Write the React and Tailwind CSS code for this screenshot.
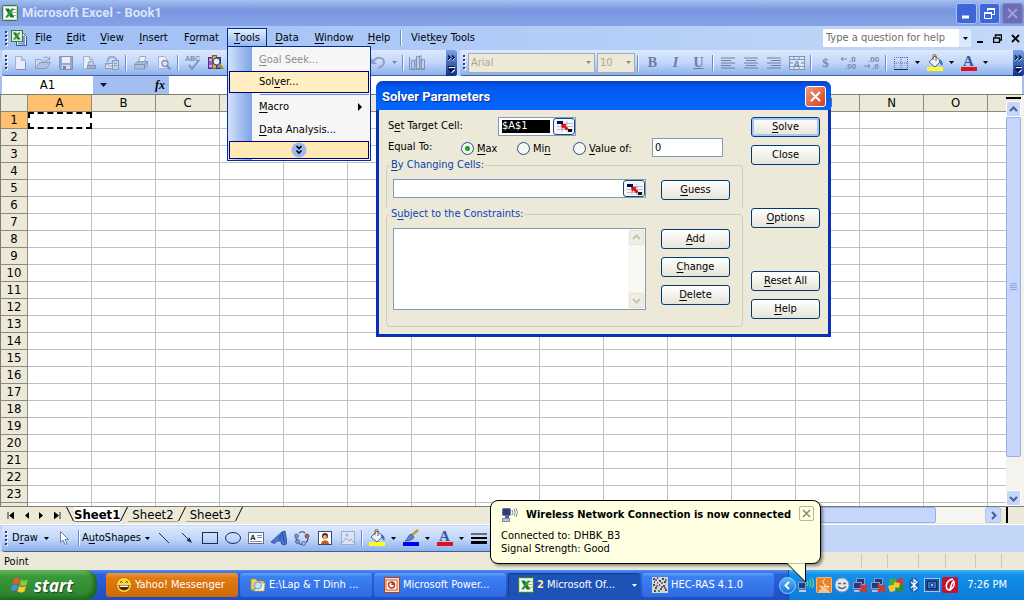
import { Fragment } from 'react';

const columns = ['A', 'B', 'C', 'D', 'E', 'F', 'G', 'H', 'I', 'J', 'K', 'L', 'M', 'N', 'O', ''];
const rows = Array.from({ length: 24 }, (_, i) => i + 1);

// "&File" -> <u>F</u>ile
const Mnemonic = ({ text }) => {
  const i = text.indexOf('&');
  if (i < 0 || text[i + 1] === ' ') return <>{text}</>;
  return (
    <>
      {text.slice(0, i)}
      <span className="underline underline-offset-2">{text[i + 1]}</span>
      {text.slice(i + 2)}
    </>
  );
};

const Svg = ({ w = 16, h = 16, className = '', children }) => (
  <svg width={w} height={h} viewBox={`0 0 ${w} ${h}`} className={`shrink-0 ${className}`} fill="none" aria-hidden="true">
    {children}
  </svg>
);

const Caret = ({ className = 'text-black' }) => (
  <Svg w={5} h={3} className={className}>
    <path d="M0 0H5L2.5 3Z" fill="currentColor" />
  </Svg>
);

const Grip = () => (
  <Svg w={3} h={17} className="ml-[3px]">
    {[0, 4, 8, 12].map((y) => (
      <Fragment key={y}>
        <rect x="1" y={y + 2} width="2" height="2" fill="#fff" />
        <rect x="0" y={y + 1} width="2" height="2" fill="#27417f" />
      </Fragment>
    ))}
  </Svg>
);

const Separator = () => (
  <span className="flex w-[6px] shrink-0 justify-center">
    <span className="h-[16px] w-px bg-[#6a8ccb]" />
    <span className="h-[16px] w-px bg-[#f1f9ff]" />
  </span>
);

const ToolButton = ({ label, children }) => (
  <button aria-label={label} className="flex h-[22px] w-[23px] shrink-0 items-center justify-center">
    {children}
  </button>
);

const DropButton = ({ label }) => (
  <button aria-label={label} className="flex h-[22px] w-[11px] shrink-0 items-center justify-center">
    <Caret />
  </button>
);

const EndCap = () => (
  <button
    aria-label="Toolbar options"
    className="flex h-[26px] w-[11px] shrink-0 items-center justify-center rounded-r-[3px] bg-linear-to-b from-[#7ba2ea] to-[#0a2f86]"
  >
    <Svg w={9} h={22}>
      <path d="M1.500 4.500L3.500 6.500L1.500 8.500M5.500 4.500L7.500 6.500L5.500 8.500" stroke="#fff" />
      <path d="M1 3.500L3 5.500L1 7.500M5 3.500L7 5.500L5 7.500" stroke="#000830" strokeWidth="1.300" />
      <path d="M2 15.500h6M2.500 18h5L5 20.500Z" stroke="#fff" fill="#fff" />
      <path d="M1 14.500h6M1 17h6L4 20Z" stroke="#000830" strokeWidth="0.800" fill="#000830" />
    </Svg>
  </button>
);

/* ---------- icons ---------- */

const ExcelIcon = () => (
  <Svg>
    <rect x="0.500" y="0.500" width="15" height="15" rx="1" fill="#c5e3bd" stroke="#3c7a3a" />
    <rect x="2" y="2" width="12" height="12" fill="#fff" />
    <path d="M10 4.500h4M10 7.500h4M10 10.500h4" stroke="#8cc084" />
    <path d="M3 3.500h4l5.500 9H8.500Z" fill="#1b7a2c" />
    <path d="M9.500 3.500h3L6 12.500H3Z" fill="#37963f" />
  </Svg>
);

const BookIcon = () => (
  <Svg w={17} h={17}>
    <path d="M5.500 3.500h7l3 3v9h-10Z" fill="#f2f6fe" stroke="#31508f" />
    <path d="M13 6v9.500M7 13.500h6" stroke="#7894cb" strokeWidth="2" />
    <rect x="0.500" y="0.500" width="11" height="11" fill="#d9efd2" stroke="#3c7a3a" />
    <path d="M2 2.500h3l4.500 7h-3Z" fill="#1b7a2c" />
    <path d="M7.500 2.500h2L4.500 9.500H2Z" fill="#37963f" />
  </Svg>
);

const PageIcon = () => (
  <Svg>
    <path d="M3.500 1.500h6l4 4v9h-10Z" fill="#e6ecf9" stroke="#a3b1d2" />
    <path d="M9.500 1.500v4h4" fill="#c5d0e8" stroke="#a3b1d2" />
    <path d="M4 14.500h9.500V7" stroke="#8292b8" />
  </Svg>
);

const OpenIcon = () => (
  <Svg>
    <path d="M0.500 13V4.500h5l1 1.500h5v2" fill="#d0daf0" stroke="#94a4c6" />
    <path d="M0.500 13.500L4.500 7.500h11l-4 6Z" fill="#b4c2e0" stroke="#8b9bbd" />
    <path d="M8.500 3.500c2-2.500 4.500-1.500 5.500 1m0.500-3v3.500H11" stroke="#8b9bbd" />
  </Svg>
);

const SaveIcon = () => (
  <Svg>
    <path d="M1.500 1.500h13v13h-12l-1-1Z" fill="#98a8cc" stroke="#8393b8" />
    <rect x="4" y="2" width="8" height="6" fill="#e8eefa" />
    <rect x="4" y="10" width="8" height="4" fill="#d5def0" />
    <rect x="5" y="11" width="3" height="3" fill="#7585aa" />
  </Svg>
);

const PermissionIcon = () => (
  <Svg>
    <path d="M2.500 1.500h6l3 3v9h-9Z" fill="#e9eef9" stroke="#a3b1cd" />
    <path d="M8.500 1.500v3h3" stroke="#a3b1cd" />
    <circle cx="10" cy="9" r="3" fill="#c2cde4" stroke="#94a4c6" />
    <rect x="6.500" y="10.500" width="8" height="3" fill="#a3b2d0" stroke="#8494b8" />
  </Svg>
);

const MailIcon = () => (
  <Svg>
    <path d="M3.500 7a4.500 4.500 0 0 1 9-1.500" stroke="#98a8c8" strokeWidth="2" />
    <path d="M1.500 8.500h10v5h-10Z" fill="#dbe3f4" stroke="#8b9bbd" />
    <path d="M1.500 8.500l5 3l5-3" stroke="#8b9bbd" />
    <rect x="8.500" y="5.500" width="6" height="9" fill="#c6d1e6" stroke="#8b9bbd" />
    <path d="M10 8.500h3M10 10.500h3" stroke="#8b9bbd" />
  </Svg>
);

const PrintIcon = () => (
  <Svg>
    <path d="M5.500 6.500l1.500-5h6l-1.500 5" fill="#eef2fb" stroke="#98a8c8" />
    <path d="M1.500 9.500l3-3h10v4l-3 3.500h-10Z" fill="#aebcd9" stroke="#8b9bbd" />
    <path d="M2 9.500h9.500v4M11.500 9.500l3-2.500" stroke="#7f8fb2" />
  </Svg>
);

const PreviewIcon = () => (
  <Svg>
    <path d="M2.500 1.500h6l3 3v9h-9Z" fill="#e9eef9" stroke="#a3b1cd" />
    <circle cx="9" cy="8.500" r="3" fill="#d8e2f5" stroke="#8090b4" strokeWidth="1.300" />
    <path d="M11 11l3.500 3.500" stroke="#8090b4" strokeWidth="2" />
  </Svg>
);

const SpellIcon = () => (
  <Svg w={18} h={18}>
    <text x="1" y="7" fontSize="7" fontWeight="bold" fill="#7b8cb3" fontFamily="Liberation Sans, sans-serif">ABC</text>
    <path d="M5 11l3 4l7-9" stroke="#7b93c8" strokeWidth="2" />
  </Svg>
);

const ResearchIcon = () => (
  <Svg w={17} h={17}>
    <rect x="1.500" y="3.500" width="4" height="11" fill="#8f62c8" stroke="#50307a" />
    <rect x="5.500" y="1.500" width="4" height="13" fill="#e0a060" stroke="#8a5a30" />
    <rect x="9.500" y="3.500" width="4" height="11" fill="#5d87d9" stroke="#223f80" />
    <path d="M2 6h3M6 5h3M2 12h3" stroke="#fff" />
    <circle cx="9.500" cy="7.500" r="3.500" fill="#e3f0ff" stroke="#333" />
    <path d="M12 10l4 5" stroke="#b98a20" strokeWidth="2.500" />
  </Svg>
);

const UndoIcon = () => (
  <Svg>
    <path d="M3 7c3-6 11-5 11 0c0 3-3 5-6 6" stroke="#8fa1c6" strokeWidth="2" />
    <path d="M1 3v6h6Z" fill="#8fa1c6" />
  </Svg>
);

const ChartIcon = () => (
  <Svg w={17} h={17}>
    <path d="M2.500 6.500h3v8h-3ZM7.500 2.500h3v12h-3ZM12.500 5.500h3v9h-3Z" fill="#c4cfe5" stroke="#8494b8" />
    <path d="M5.500 6.500l1.500-1.500v9M10.500 2.500l1.500-1v13M0.500 3v12.500H16" stroke="#8494b8" />
  </Svg>
);

const alignLines = {
  left: [[1, 15], [1, 11], [1, 15], [1, 11], [1, 15]],
  center: [[1, 15], [3, 13], [1, 15], [3, 13], [1, 15]],
  right: [[1, 15], [5, 15], [1, 15], [5, 15], [1, 15]],
};

const AlignIcon = ({ side }) => (
  <Svg>
    {alignLines[side].map(([a, b], i) => (
      <path key={i} d={`M${a} ${i * 2.5 + 3}H${b}`} stroke="#6f7f9f" />
    ))}
  </Svg>
);

const MergeIcon = () => (
  <Svg>
    <rect x="0.500" y="1.500" width="15" height="13" fill="#dfe7f6" stroke="#8393b5" />
    <path d="M0.500 4.500h15M0.500 11.500h15M5 1.500v3M10 1.500v3M5 11.500v3M10 11.500v3" stroke="#8393b5" />
    <path d="M1 8h3M12 8h3" stroke="#6f7f9f" />
    <text x="5" y="10.500" fontSize="9" fontWeight="bold" fill="#6f7f9f" fontFamily="Liberation Sans, sans-serif">a</text>
  </Svg>
);

const DecimalIcon = ({ more }) => (
  <Svg w={18}>
    <g fontSize="8" fontWeight="bold" fill="#7686a8" fontFamily="Liberation Sans, sans-serif">
      <text x={more ? 9 : 5} y="7">{more ? '.0' : '.00'}</text>
      <text x={more ? 5 : 9} y="14">{more ? '.00' : '.0'}</text>
    </g>
    {more ? (
      <path d="M7 4H1M3 2L1 4l2 2" stroke="#7686a8" />
    ) : (
      <path d="M1 11h6M5 9l2 2l-2 2" stroke="#7686a8" />
    )}
  </Svg>
);

const BordersIcon = () => (
  <Svg>
    <path d="M1.500 2v12M8 2v12M14.500 2v12M1 2.500h14M1 8h14" stroke="#5c6f9b" strokeDasharray="1 1" />
    <path d="M1 14.500h14" stroke="#1b2c58" />
  </Svg>
);

const FillIcon = ({ color = '#ffff1a' }) => (
  <Svg w={18} h={18}>
    <path d="M3 8l6-6l6 5l-6 6Z" fill="#eef3fb" stroke="#4f5f80" />
    <path d="M7 6V2a1.500 1.500 0 0 1 3 0v5" stroke="#7a5a20" />
    <path d="M13 6c3 0 4 2 3.500 6c-2-1-2.500-3-3.500-5Z" fill="#3f6fc0" />
    <rect x="1" y="13" width="16" height="4" fill={color} />
  </Svg>
);

const BrushIcon = () => (
  <Svg w={18} h={18}>
    <path d="M16 1L9 7" stroke="#c59a35" strokeWidth="2.500" />
    <path d="M9 5l3 3c-1 3-5 4-9 4c3-2 3-6 6-7Z" fill="#5d84cc" stroke="#2b4480" strokeWidth="0.700" />
    <rect x="1" y="13" width="16" height="4" fill="#0000f0" />
  </Svg>
);

const FontColorIcon = () => (
  <Svg w={18} h={18}>
    <text x="3" y="12" fontSize="15" fontWeight="bold" fill="#38589a" fontFamily="Liberation Serif, serif">A</text>
    <rect x="1" y="13" width="16" height="4" fill="#e0101c" />
  </Svg>
);

const PointerIcon = () => (
  <Svg>
    <path d="M4.500 1.500v11l2.500-2.500l2 4.500l2-1l-2-4h3.500Z" fill="#fff" stroke="#6d7fa8" />
  </Svg>
);

const TextBoxIcon = () => (
  <Svg>
    <rect x="0.500" y="2.500" width="15" height="11" fill="#fff" stroke="#5d6f97" />
    <text x="2" y="10" fontSize="8" fontWeight="bold" fill="#222" fontFamily="Liberation Sans, sans-serif">A</text>
    <path d="M9 5.500h5M9 7.500h5M2 11.500h12" stroke="#7f8fb3" />
  </Svg>
);

const WordArtIcon = () => (
  <Svg>
    <path d="M0 12L11 2l3-1l2 12l-2 2l-3.500-1l-0.500-3H6.500L3.500 13.500ZM8 8.500h2l-0.500-3Z" fill="#4a7ad6" stroke="#1f3f8a" strokeWidth="0.800" fillRule="evenodd" />
    <path d="M11 2l2.500 11" stroke="#1f3f8a" />
  </Svg>
);

const DiagramIcon = () => (
  <Svg>
    <path d="M5 3q3-2.500 6 0M14 8q0 3-2 4.500M2 8q0 1 1 2M5 13.500q1.500 1 3 1" stroke="#33508f" strokeWidth="1.200" />
    <circle cx="2.500" cy="6" r="2" fill="#8b96ae" stroke="#4a5778" strokeWidth="0.700" />
    <circle cx="13" cy="6" r="2" fill="#b5655f" stroke="#6a2a28" strokeWidth="0.700" />
    <circle cx="3.500" cy="11.500" r="2" fill="#7f97cc" stroke="#33508f" strokeWidth="0.700" />
    <circle cx="9.500" cy="13.500" r="2" fill="#a3b6e4" stroke="#33508f" strokeWidth="0.700" />
  </Svg>
);

const ClipArtIcon = () => (
  <Svg>
    <rect x="1.500" y="1.500" width="13" height="13" fill="#fff" stroke="#39496e" />
    <circle cx="8" cy="6" r="3" fill="#4a2a18" />
    <circle cx="8" cy="7" r="2" fill="#f0b070" />
    <path d="M4 14c0-5 8-5 8 0Z" fill="#c85a20" />
  </Svg>
);

const PictureIcon = () => (
  <Svg>
    <rect x="1.500" y="1.500" width="13" height="13" fill="#dde4f4" stroke="#a0aecb" />
    <path d="M2 13l4-5l3 3l2-2l3 4" stroke="#98a6c4" />
    <circle cx="7" cy="5" r="1.500" fill="#a9b6d0" />
  </Svg>
);

const RefPickerIcon = () => (
  <Svg w={17} h={12}>
    <path d="M1 3.500h16M1 6.500h16M1 9.500h16M6 1v11M11 1v11" stroke="#b7bccb" />
    <rect x="1" y="1" width="6" height="3" fill="#08085a" />
    <rect x="12" y="9" width="4" height="3" fill="#111" />
    <path d="M5 4h5.500L9.500 5.500l3 3l-2 2l-3-3L6 9Z" fill="#e01010" />
  </Svg>
);

const NetworkIcon = () => (
  <Svg w={17}>
    <rect x="1.500" y="1.500" width="8" height="7" rx="1" fill="#2f3d78" stroke="#6a7298" />
    <path d="M4 10h4" stroke="#555e82" strokeWidth="2" />
    <rect x="1.500" y="11.500" width="7" height="3" fill="#c2c8dc" stroke="#8088a8" />
    <path d="M11 3q2 2.500 0 5M13 2q2.500 3.500 0 7M15 1q3 4.500 0 9" stroke="#7c86a8" />
  </Svg>
);

const Chevron = ({ dir = 'up', className = 'text-[#4d6185]' }) => {
  const d = {
    up: 'M1 6L4.5 2.5L8 6',
    down: 'M1 3L4.5 6.5L8 3',
    left: 'M6 1L2.500 4.500L6 8',
    right: 'M3 1L6.500 4.500L3 8',
  }[dir];
  return (
    <Svg w={9} h={9} className={className}>
      <path d={d} stroke="currentColor" strokeWidth="2" />
    </Svg>
  );
};

/* ---------- window parts ---------- */

const TitleBar = () => (
  <header className="flex h-[26px] shrink-0 items-center bg-linear-to-b from-[#a3bff0] via-[#7a96df] via-40% to-[#86a3e6] pl-[2px] pr-px">
    <ExcelIcon />
    <h1 className="ml-1 text-[13px] font-bold text-[#dbe5fa] font-['Roboto','Noto_Sans',sans-serif]">Microsoft Excel - Book1</h1>
    <div className="ml-auto flex gap-[2px]">
      <button aria-label="Minimize" className="flex size-[21px] items-center justify-center rounded-[3px] border border-[#a9c0f2] bg-[#3e66d8]">
        <Svg w={13} h={13}><path d="M2 10h7" stroke="#fff" strokeWidth="3" /></Svg>
      </button>
      <button aria-label="Restore" className="flex size-[21px] items-center justify-center rounded-[3px] border border-[#a9c0f2] bg-[#3e66d8]">
        <Svg w={13} h={13}>
          <path d="M4.500 4V1.500h7v6H9" stroke="#fff" />
          <path d="M4 2h8" stroke="#fff" strokeWidth="2" />
          <path d="M1.500 5.500h7v6h-7Z" stroke="#fff" />
          <path d="M1 6h8" stroke="#fff" strokeWidth="2" />
        </Svg>
      </button>
      <button aria-label="Close" className="flex size-[21px] items-center justify-center rounded-[3px] border border-[#8388c8] bg-[#6c6db5]">
        <Svg w={13} h={13}><path d="M2 2l9 9M11 2l-9 9" stroke="#a09fd8" strokeWidth="2" /></Svg>
      </button>
    </div>
  </header>
);

const ToolsMenu = () => (
  <div role="menu" className="absolute left-[-1px] top-full z-20 -mt-px w-[144px] border border-[#002d96] bg-linear-to-r from-[#d3e2fb] to-[#7da3e4] bg-[length:24px_100%] bg-no-repeat bg-[#f6f6f6] p-px">
    <button role="menuitem" className="flex h-[23px] w-full items-center pl-[30px] text-[#8d8d8d]">
      <Mnemonic text="&Goal Seek..." />
    </button>
    <button role="menuitem" className="flex h-[22px] w-full items-center border border-[#000080] bg-[#ffeec2] pl-[29px]">
      <Mnemonic text="Sol&ver..." />
    </button>
    <div className="ml-[31px] mt-px h-px bg-[#6a8ccb]" />
    <button role="menuitem" className="flex h-[23px] w-full items-center pl-[30px]">
      <Mnemonic text="&Macro" />
      <Svg w={5} h={8} className="ml-auto mr-[7px]"><path d="M1 0v8l4-4Z" fill="#000" /></Svg>
    </button>
    <button role="menuitem" className="flex h-[23px] w-full items-center pl-[30px]">
      <Mnemonic text="&Data Analysis..." />
    </button>
    <button aria-label="Expand menu" className="flex h-[18px] w-full items-center justify-center border border-[#000080] bg-[#ffe9b4]">
      <Svg>
        <circle cx="8" cy="8" r="7.500" fill="#9dbaf0" />
        <path d="M5.500 4L8 6.500L10.500 4M5.500 8.500L8 11l2.500-2.500" stroke="#000" strokeWidth="1.600" />
      </Svg>
    </button>
  </div>
);

const menus = [
  { text: '&File', width: 'w-[31px]' },
  { text: '&Edit', width: 'w-[34px]' },
  { text: '&View', width: 'w-[38px]' },
  { text: '&Insert', width: 'w-[45px]' },
  { text: 'F&ormat', width: 'w-[51px]' },
  { text: '&Tools', width: 'w-[40px]', open: true },
  { text: '&Data', width: 'w-[40px]' },
  { text: '&Window', width: 'w-[54px]' },
  { text: '&Help', width: 'w-[36px]' },
];

const MenuBar = () => (
  <nav className="flex h-[24px] shrink-0 items-center bg-linear-to-r from-[#9ebef5] to-[#c4d9f9] pl-[2px]">
    <Grip />
    <span className="ml-[3px]"><BookIcon /></span>
    {menus.map((m) =>
      m.open ? (
        <div key={m.text} className={`relative mt-[2px] h-[19px] self-start border border-b-0 border-[#002d96] bg-linear-to-b from-[#e3efff] to-[#8fb2ee] ${m.width}`}>
          <button className="flex h-[18px] w-full items-center justify-center"><Mnemonic text={m.text} /></button>
          <ToolsMenu />
        </div>
      ) : (
        <button key={m.text} className={`h-[20px] text-center ${m.width}`}><Mnemonic text={m.text} /></button>
      )
    )}
    <span className="ml-px"><Separator /></span>
    <button className="h-[20px] w-[78px] text-center"><Mnemonic text="Viet&key Tools" /></button>
    <div className="ml-auto flex h-[18px] w-[148px] bg-white">
      <input
        aria-label="Type a question for help"
        placeholder="Type a question for help"
        className="w-0 flex-1 pl-[3px] outline-none placeholder:text-[#6d6d6d]"
      />
      <button aria-label="Help topics" className="flex w-[12px] items-center justify-center bg-[#dce8fc]"><Caret /></button>
    </div>
    <div className="ml-[2px] mr-px flex gap-[2px]">
      <button aria-label="Minimize workbook" className="flex size-[14px] items-end justify-center pb-px"><span className="h-[2px] w-[6px] bg-black" /></button>
      <button aria-label="Restore workbook" className="flex size-[16px] items-center justify-center">
        <Svg w={9} h={9}><path d="M2.500 3V1h6v5H7M0.500 4h6v4.500h-6Z" stroke="#000" strokeWidth="1.400" /></Svg>
      </button>
      <button aria-label="Close workbook" className="flex size-[16px] items-center justify-center">
        <Svg w={9} h={9}><path d="M1 1l7 7M8 1L1 8" stroke="#000" strokeWidth="1.800" /></Svg>
      </button>
    </div>
  </nav>
);

const barClass = 'flex h-[26px] items-center rounded-[3px] bg-linear-to-b from-[#dde9fd] via-[#c2d7fa] via-50% to-[#8eb0ec] border-b border-[#3b619c]';

const Toolbars = () => (
  <div className="flex h-[26px] shrink-0 gap-[3px] bg-[#bdd3f8] pl-[2px]">
    <div className={`${barClass} w-[455px] shrink-0`}>
      <Grip />
      <ToolButton label="New"><PageIcon /></ToolButton>
      <ToolButton label="Open"><OpenIcon /></ToolButton>
      <ToolButton label="Save"><SaveIcon /></ToolButton>
      <ToolButton label="Permission"><PermissionIcon /></ToolButton>
      <ToolButton label="E-mail"><MailIcon /></ToolButton>
      <Separator />
      <ToolButton label="Print"><PrintIcon /></ToolButton>
      <ToolButton label="Print Preview"><PreviewIcon /></ToolButton>
      <Separator />
      <ToolButton label="Spelling"><SpellIcon /></ToolButton>
      <ToolButton label="Research"><ResearchIcon /></ToolButton>
      <div className="ml-auto flex items-center pr-[17px]">
        <ToolButton label="Undo"><UndoIcon /></ToolButton>
        <button aria-label="Undo list" className="flex w-[11px] justify-center"><Caret className="text-[#7686a8]" /></button>
        <Separator />
        <ToolButton label="Chart Wizard"><ChartIcon /></ToolButton>
      </div>
      <EndCap />
    </div>
    <div className={`${barClass} min-w-0 flex-1`}>
      <Grip />
      <select aria-label="Font" disabled className="ml-[2px] h-[20px] w-[127px] shrink-0 appearance-none border border-[#9fabc0] bg-[#ece9d8] pl-[2px] text-[#aca899]">
        <option>Arial</option>
      </select>
      <Svg w={5} h={3} className="-ml-[9px] mr-1"><path d="M0 0H5L2.500 3Z" fill="#8f8d80" /></Svg>
      <select aria-label="Font Size" disabled className="ml-[2px] h-[20px] w-[38px] shrink-0 appearance-none border border-[#9fabc0] bg-[#ece9d8] pl-[2px] text-[#aca899]">
        <option>10</option>
      </select>
      <Svg w={5} h={3} className="-ml-[9px] mr-1"><path d="M0 0H5L2.500 3Z" fill="#8f8d80" /></Svg>
      <Separator />
      <ToolButton label="Bold"><span className="text-[14px] font-bold text-[#6c7ca0] font-['Liberation_Serif',serif]">B</span></ToolButton>
      <ToolButton label="Italic"><span className="text-[14px] font-bold italic text-[#6c7ca0] font-['Liberation_Serif',serif]">I</span></ToolButton>
      <ToolButton label="Underline"><span className="text-[14px] font-bold text-[#6c7ca0] underline font-['Liberation_Serif',serif]">U</span></ToolButton>
      <Separator />
      <ToolButton label="Align Left"><AlignIcon side="left" /></ToolButton>
      <ToolButton label="Center"><AlignIcon side="center" /></ToolButton>
      <ToolButton label="Align Right"><AlignIcon side="right" /></ToolButton>
      <ToolButton label="Merge and Center"><MergeIcon /></ToolButton>
      <Separator />
      <ToolButton label="Currency"><span className="text-[13px] font-bold text-[#7686a8] font-['Liberation_Serif',serif]">$</span></ToolButton>
      <ToolButton label="Increase Decimal"><DecimalIcon more /></ToolButton>
      <ToolButton label="Decrease Decimal"><DecimalIcon /></ToolButton>
      <Separator />
      <ToolButton label="Borders"><BordersIcon /></ToolButton>
      <DropButton label="Border styles" />
      <ToolButton label="Fill Color"><FillIcon /></ToolButton>
      <DropButton label="Fill colors" />
      <ToolButton label="Font Color"><FontColorIcon /></ToolButton>
      <DropButton label="Font colors" />
      <span className="ml-auto"><EndCap /></span>
    </div>
  </div>
);

const FormulaBar = () => (
  <div className="flex h-[18px] shrink-0 bg-[#a3bff2] px-[2px]">
    <input aria-label="Name Box" defaultValue="A1" className="w-[91px] bg-white text-center text-[13px] outline-none" />
    <button aria-label="Names" className="flex w-[20px] items-center justify-center">
      <Svg w={7} h={4}><path d="M0 0H7L3.500 4Z" fill="#001040" /></Svg>
    </button>
    <button aria-label="Insert Function" className="ml-auto w-[16px] text-[12px] font-bold italic leading-4 font-['Liberation_Serif',serif]">fx</button>
    <input aria-label="Formula" className="ml-px w-[calc(100%-167px)] bg-white outline-none" />
  </div>
);

const Sheet = () => (
  <main className="flex min-h-0 flex-1 border-l border-t border-[#7f7d70] bg-[#ece9d8]">
    <div className="min-w-0 flex-1 overflow-hidden bg-white">
      <table className="w-max table-fixed border-separate border-spacing-0 text-[13px] leading-4">
        <thead>
          <tr>
            <th className="h-[17px] w-[27px] border-b border-r border-[#8e8b7c] bg-[#ece9d8] p-0" />
            {columns.map((c) => (
              <th
                key={c}
                scope="col"
                className={`h-[17px] w-[64px] border-b border-r border-[#8e8b7c] p-0 font-normal ${c === 'A' ? 'bg-[#ffc06f]' : 'bg-[#ece9d8]'}`}
              >
                {c}
              </th>
            ))}
          </tr>
        </thead>
        <tbody>
          {rows.map((r) => (
            <tr key={r}>
              <th
                scope="row"
                className={`h-[17px] border-b border-r border-[#8e8b7c] p-0 font-normal ${r === 1 ? 'bg-[#ffc06f]' : 'bg-[#ece9d8]'}`}
              >
                {r < 24 && r}
              </th>
              {columns.map((c) => (
                <td
                  key={c}
                  className={c === 'A' && r === 1 ? 'border-2 border-dashed border-black p-0' : 'border-b border-r border-[#c0c0c0] p-0'}
                />
              ))}
            </tr>
          ))}
        </tbody>
      </table>
    </div>
    <div className="flex w-[18px] shrink-0 flex-col bg-[#f4f3ee] pr-[3px]">
      <div className="flex h-[6px] shrink-0 items-center bg-[#ece9d8]"><span className="h-[2px] w-full bg-black" /></div>
      <button aria-label="Scroll up" className="flex h-[16px] shrink-0 items-center justify-center rounded-[2px] border border-white bg-[#c5d5fb]"><Chevron /></button>
      <div className="flex flex-1 flex-col pb-[33px]">
        <div className="flex flex-1 items-center justify-center rounded-[2px] border border-[#98b0e8] bg-[#c5d5fb]">
          <Svg w={7} h={8}><path d="M0 0.500h7M0 2.500h7M0 4.500h7M0 6.500h7" stroke="#8ca6e0" /></Svg>
        </div>
      </div>
      <button aria-label="Scroll down" className="flex h-[16px] shrink-0 items-center justify-center rounded-[2px] border border-white bg-[#c5d5fb]"><Chevron dir="down" /></button>
    </div>
  </main>
);

const TabEdge = ({ d = 'M7.500 0L0.500 14' }) => (
  <Svg w={8} h={15}><path d={d} stroke="#000" /></Svg>
);

const SheetTabs = () => (
  <div className="flex h-[18px] shrink-0 items-start border-t border-[#7f7d70] bg-[#ece9d8] pl-[2px]">
    <div className="flex h-[16px] w-[64px] shrink-0 items-center justify-around">
      <button aria-label="First sheet"><Svg w={7} h={7}><path d="M1 0v7M7 0v7L2.500 3.500Z" stroke="#000" fill="#000" strokeWidth="0.800" /></Svg></button>
      <button aria-label="Previous sheet"><Svg w={4} h={7}><path d="M4 0v7L0 3.500Z" fill="#000" /></Svg></button>
      <button aria-label="Next sheet"><Svg w={4} h={7}><path d="M0 0v7L4 3.500Z" fill="#000" /></Svg></button>
      <button aria-label="Last sheet"><Svg w={7} h={7}><path d="M6 0v7M0 0v7L4.500 3.500Z" stroke="#000" fill="#000" strokeWidth="0.800" /></Svg></button>
    </div>
    <TabEdge d="M0.500 0L7.500 14" />
    <button className="h-[15px] border-b border-[#7f7d70] bg-white text-[13px] font-bold leading-4">Sheet1</button>
    <TabEdge />
    <button className="h-[15px] border-b border-[#a8a594] px-1 text-[13px] leading-4">Sheet2</button>
    <TabEdge />
    <button className="h-[15px] border-b border-[#a8a594] px-1 text-[13px] leading-4">Sheet3</button>
    <TabEdge />
    <div className="ml-auto flex h-[16px] w-[50%] pr-[16px]">
      <div className="flex flex-1 bg-[#f6f5f0]">
        <div className="mr-[49px] flex-1 rounded-[2px] border border-[#98b0e8] bg-[#c5d5fb]" />
      </div>
      <button aria-label="Scroll right" className="flex w-[16px] items-center justify-center rounded-[2px] border border-[#b5c6f0] bg-[#c5d5fb]"><Chevron dir="right" /></button>
      <span className="ml-[5px] w-[2px] bg-black" />
    </div>
  </div>
);

const DrawingBar = () => (
  <div className="flex h-[28px] shrink-0 items-center border-t border-white bg-[#c4d6f8] pl-[2px]">
    <div className={`${barClass} w-[640px]`}>
      <Grip />
      <button className="ml-1 flex items-center gap-[6px]"><span><Mnemonic text="D&raw" /></span><Caret /></button>
      <span className="ml-1"><ToolButton label="Select Objects"><PointerIcon /></ToolButton></span>
      <Separator />
      <button className="flex items-center gap-[4px]"><span><Mnemonic text="A&utoShapes" /></span><Caret /></button>
      <span className="w-[2px]" />
      <ToolButton label="Line"><Svg><path d="M3 3l10 10" stroke="#1c2c58" /></Svg></ToolButton>
      <ToolButton label="Arrow"><Svg><path d="M3 3l8 8" stroke="#1c2c58" /><path d="M13 13l-5.500-2.500l3-3Z" fill="#1c2c58" /></Svg></ToolButton>
      <ToolButton label="Rectangle"><Svg><rect x="0.500" y="2.500" width="15" height="11" stroke="#1c2c58" /></Svg></ToolButton>
      <ToolButton label="Oval"><Svg><ellipse cx="8" cy="8" rx="7.500" ry="5.500" stroke="#1c2c58" /></Svg></ToolButton>
      <ToolButton label="Text Box"><TextBoxIcon /></ToolButton>
      <ToolButton label="WordArt"><WordArtIcon /></ToolButton>
      <ToolButton label="Diagram"><DiagramIcon /></ToolButton>
      <ToolButton label="Clip Art"><ClipArtIcon /></ToolButton>
      <ToolButton label="Picture"><PictureIcon /></ToolButton>
      <Separator />
      <ToolButton label="Fill Color"><FillIcon /></ToolButton>
      <DropButton label="Fill colors" />
      <ToolButton label="Line Color"><BrushIcon /></ToolButton>
      <DropButton label="Line colors" />
      <ToolButton label="Font Color"><FontColorIcon /></ToolButton>
      <DropButton label="Font colors" />
      <ToolButton label="Line Style"><Svg><path d="M0 4h16" stroke="#000" /><path d="M0 8h16" stroke="#000" strokeWidth="2" /><path d="M0 12.500h16" stroke="#000" strokeWidth="3" /></Svg></ToolButton>
    </div>
  </div>
);

const StatusBar = () => (
  <footer className="flex h-[18px] shrink-0 items-center bg-[#ece9d8] pl-[4px]">
    <span className="mt-[2px]">Point</span>
    <div className="ml-auto flex h-[14px] pr-[22px]">
      <span className="w-[26px] border-l border-[#cbc7b4]" />
      <span className="w-[31px] border-l border-[#cbc7b4]" />
      <span className="w-[27px] border-l border-[#cbc7b4]" />
      <span className="w-[30px] border-l border-[#cbc7b4]" />
      <span className="w-[27px] border-x border-[#cbc7b4]" />
    </div>
  </footer>
);

/* ---------- solver dialog ---------- */

const XpButton = ({ text, primary, className = '' }) => (
  <button
    className={`h-[20px] w-[69px] shrink-0 rounded-[3px] border border-[#003c74] bg-linear-to-b from-white to-[#e6e4d8] pb-px ${primary ? 'shadow-[inset_0_0_0_2px_#a9c4f2]' : ''} ${className}`}
  >
    <Mnemonic text={text} />
  </button>
);

const PickerButton = ({ label }) => (
  <button aria-label={label} className="flex w-[22px] shrink-0 items-center justify-center rounded-[3px] border border-[#1c4a78] bg-[#f4f6fb]">
    <RefPickerIcon />
  </button>
);

const Radio = ({ text, checked }) => (
  <label className="flex w-[56px] shrink-0 items-center gap-[3px] whitespace-nowrap">
    <input
      type="radio"
      name="equal"
      defaultChecked={checked}
      className="size-[13px] shrink-0 appearance-none rounded-full border border-[#21517e] bg-[#f5f5f1] checked:bg-[radial-gradient(circle,#21a121_0_2px,#f5f5f1_3px)]"
    />
    <span className="mt-px"><Mnemonic text={text} /></span>
  </label>
);

const SolverDialog = () => (
  <section
    role="dialog"
    aria-labelledby="solver-title"
    className="absolute left-[376px] top-[81px] z-10 w-[455px] rounded-t-[7px] border-[3px] border-t-0 border-[#0831b9] bg-[#ece9d8]"
  >
    <div className="-mx-[3px] flex h-[29px] items-center rounded-t-[7px] bg-linear-to-b from-[#0a3cc8] via-[#0058ee] via-20% to-[#0466ff] pl-[6px] pr-[5px]">
      <h2 id="solver-title" className="mt-[2px] text-[13px] font-bold text-white [text-shadow:1px_1px_0_#0a2c8c] font-['Roboto','Noto_Sans',sans-serif]">Solver Parameters</h2>
      <button aria-label="Close dialog" className="ml-auto mt-[2px] flex size-[21px] items-center justify-center rounded-[3px] border border-white bg-linear-to-br from-[#f09a80] to-[#d03a10]">
        <Svg w={13} h={13}><path d="M2 2l9 9M11 2l-9 9" stroke="#fff" strokeWidth="2" /></Svg>
      </button>
    </div>
    <div className="flex pb-[7px] pl-[7px] pr-[8px]">
      <div className="w-[357px]">
        <div className="mt-[6px] flex h-[20px] items-center pl-[2px]">
          <label htmlFor="target" className="w-[110px]">S<span className="underline underline-offset-2">e</span>t Target Cell:</label>
          <div className="flex h-[19px] w-[78px] border border-[#7f9db9] bg-white">
            <div className="w-0 flex-1 py-[2px] pl-[3px]">
              <input id="target" defaultValue="$A$1" className="block h-[13px] w-[48px] bg-black text-white outline-none" />
            </div>
            <PickerButton label="Pick target cell" />
          </div>
        </div>
        <div className="flex h-[22px] items-center pl-[2px]">
          <span className="w-[73px]">Equal To:</span>
          <div className="mt-[2px] flex">
            <Radio text="&Max" checked />
            <Radio text="Mi&n" />
            <Radio text="&Value of:" />
          </div>
          <input aria-label="Value" defaultValue="0" className="ml-[23px] h-[19px] w-[71px] border border-[#7f9db9] bg-white pl-[2px] outline-none" />
        </div>
        <fieldset className="h-[49px] rounded-t-[4px] border border-b-0 border-[#d0cdbb] px-[6px]">
          <legend className="-ml-[3px] h-[14px] px-px leading-[14px] text-[#0b3fb4]"><Mnemonic text="&By Changing Cells:" /></legend>
          <div className="mt-[7px] flex items-start justify-between">
            <div className="flex h-[19px] w-[253px] border border-[#7f9db9] bg-white">
              <input aria-label="By Changing Cells" className="w-0 flex-1 pl-[2px] outline-none" />
              <PickerButton label="Pick changing cells" />
            </div>
            <XpButton text="&Guess" className="mr-[6px] mt-px" />
          </div>
        </fieldset>
        <fieldset className="rounded-[4px] border border-[#d0cdbb] px-[6px] pb-4">
          <legend className="-ml-[3px] h-[14px] px-px leading-[14px] text-[#0b3fb4]"><Mnemonic text="S&ubject to the Constraints:" /></legend>
          <div className="mt-[7px] flex items-start justify-between">
            <div className="flex h-[82px] w-[253px] border border-[#7f9db9] bg-white">
              <select size="4" aria-label="Constraints" className="w-0 flex-1 overflow-hidden outline-none" />
              <div className="flex w-[17px] flex-col justify-between bg-[#f8f7f2] p-px">
                <button aria-label="Scroll constraints up" className="flex h-[15px] items-center justify-center rounded-[2px] border border-[#e4e2d6] bg-[#f0eee4]"><Chevron className="text-[#c5c3b6]" /></button>
                <button aria-label="Scroll constraints down" className="flex h-[15px] items-center justify-center rounded-[2px] border border-[#e4e2d6] bg-[#f0eee4]"><Chevron dir="down" className="text-[#c5c3b6]" /></button>
              </div>
            </div>
            <div className="mr-[6px] mt-px flex flex-col gap-2">
              <XpButton text="&Add" />
              <XpButton text="&Change" />
              <XpButton text="&Delete" />
            </div>
          </div>
        </fieldset>
      </div>
      <div className="ml-auto flex flex-col gap-2 pt-[7px]">
        <XpButton text="&Solve" primary />
        <XpButton text="Close" />
        <XpButton text="&Options" className="my-[35px]" />
        <XpButton text="&Reset All" />
        <XpButton text="&Help" />
      </div>
    </div>
  </section>
);

/* ---------- taskbar ---------- */

const WindowsFlag = () => (
  <Svg w={20} h={18}>
    <path d="M3 3q3-2 6 0L7.500 8.500q-3-2-6 0Z" fill="#f0562a" />
    <path d="M10 3.500q3 2 7 0L15.500 9q-3.500 2-7 0Z" fill="#8cc63f" />
    <path d="M1 9.500q3-2 6 0L5.500 15q-3-2-6 0Z" fill="#4a8cf0" />
    <path d="M8 10q3.500 2 7 0L13.500 15.500q-3.500 2-7 0Z" fill="#fcc92f" />
  </Svg>
);

const SmileyIcon = () => (
  <Svg>
    <circle cx="8" cy="8" r="7.500" fill="#ffd93a" stroke="#a86500" strokeWidth="0.700" />
    <path d="M2.500 8h11c0 7-11 7-11 0Z" fill="#5a1d08" />
    <path d="M3.500 8.500h9v1.500h-9Z" fill="#fff" />
    <path d="M4 5.500q1-2 2.500 0M9.500 5.500q1-2 2.500 0" stroke="#4a2a00" />
  </Svg>
);

const FolderIcon = () => (
  <Svg>
    <path d="M1 2h5l1 2h7v9H1Z" fill="#f3d36a" stroke="#b08a20" strokeWidth="0.700" />
    <path d="M4 6h11l-1 8H3Z" fill="#fff3c8" stroke="#c9a640" strokeWidth="0.700" />
    <circle cx="8" cy="8.500" r="3.500" fill="#b5e8f7" stroke="#7a94a8" />
    <path d="M5.500 11L3 14" stroke="#7a94a8" strokeWidth="1.500" />
  </Svg>
);

const PowerPointIcon = () => (
  <Svg>
    <rect x="0.500" y="0.500" width="15" height="15" fill="#f6ddd0" stroke="#b8401a" />
    <rect x="2" y="3" width="11" height="10" fill="#fff" stroke="#c95a30" />
    <circle cx="7.500" cy="8" r="3" fill="#fff" stroke="#b8401a" strokeWidth="1.500" />
    <path d="M7.500 8V4.500a3.500 3.500 0 0 1 3.500 3.500Z" fill="#b8401a" />
  </Svg>
);

const HecIcon = () => (
  <Svg>
    <rect width="16" height="16" fill="#d4d4d4" />
    <path d="M1 2h2M5 1h1M10 2h2M2 5h1M7 4h2M12 5h2M1 8h2M7 8h1M11 9h2M3 11h2M8 12h2M13 13h2M2 14h2" stroke="#222" strokeWidth="1.500" />
    <path d="M3 3h2M9 6h2M4 9h2M12 11h2" stroke="#a020a0" strokeWidth="1.500" />
    <path d="M13 3h2M5 6h1M9 10h2M6 14h2" stroke="#108040" strokeWidth="1.500" />
  </Svg>
);

const tasks = [
  { title: 'Yahoo! Messenger', icon: <SmileyIcon />, look: 'bg-linear-to-b from-[#f39a3c] via-[#e27a12] via-20% to-[#cf6a08]' },
  { title: 'E:\\Lap & T Dinh ...', icon: <FolderIcon />, look: 'bg-linear-to-b from-[#6aa0fb] via-[#3c81f3] via-15% to-[#2f6be0]' },
  { title: 'Microsoft Power...', icon: <PowerPointIcon />, look: 'bg-linear-to-b from-[#6aa0fb] via-[#3c81f3] via-15% to-[#2f6be0]' },
  { title: 'Microsoft Of...', count: 2, icon: <ExcelIcon />, look: 'bg-[#1e52b7] shadow-[inset_1px_1px_1px_#153a8a]' },
  { title: 'HEC-RAS 4.1.0', icon: <HecIcon />, look: 'bg-linear-to-b from-[#6aa0fb] via-[#3c81f3] via-15% to-[#2f6be0]' },
];

const OfflineIcon = () => (
  <Svg>
    <rect x="4.500" y="1.500" width="8" height="6" fill="#26387a" stroke="#8b9ac8" />
    <rect x="1.500" y="5.500" width="8" height="6" fill="#26387a" stroke="#8b9ac8" />
    <path d="M2 14h7" stroke="#b4bedc" strokeWidth="2" />
    <path d="M8 8l7 7M15 8l-7 7" stroke="#e23020" strokeWidth="2.500" />
  </Svg>
);

const trayIcons = [
  ['Wireless', <Svg key="w"><rect x="0.500" y="5.500" width="7" height="6" fill="#26387a" stroke="#8b9ac8" /><path d="M1 14h7" stroke="#c4cce4" strokeWidth="2" /><path d="M9 4q2 2 0 5M11.500 2q2.500 4 0 8M14 1q3 5 0 10" stroke="#5fe070" strokeWidth="1.200" /></Svg>],
  ['Java', <Svg key="j"><rect x="0.500" y="0.500" width="15" height="15" rx="1" fill="#e8832a" stroke="#f7b878" /><path d="M9 2q-4 2.500-1 4.500t0 3M4 9.500q3 1.500 7 0q3-1 1 2M5 12h6M3 14h10" stroke="#fff" /></Svg>],
  ['Messenger', <Svg key="m"><circle cx="8" cy="8" r="7" fill="#e4e8ee" stroke="#8c98ac" /><path d="M4 6.500h3M9 6.500h3M4 9.500q4 4 8 0" stroke="#55627a" strokeWidth="1.300" /></Svg>],
  ['Local Area Connection', <OfflineIcon key="l" />],
  ['Local Area Connection 2', <OfflineIcon key="l2" />],
  ['Antivirus', <Svg key="a"><path d="M2 1l6 1v5L1 8Z" fill="#3fae3a" /><path d="M9 2l6-1v7H9Z" fill="#d83a28" /><path d="M0 9l8-2l-1 7l-5 1Z" fill="#f0cc2c" /><path d="M8 8h8l-1 7H8Z" fill="#2a8c48" /><path d="M6 5l6 1l-1 5l-5-1Z" fill="#f0cc2c" /></Svg>],
  ['Bluetooth', <Svg key="b"><ellipse cx="8" cy="8" rx="5" ry="7.500" fill="#1560b8" /><path d="M5 5l6 6l-3 2.500v-11L11 5l-6 6" stroke="#fff" strokeWidth="1.200" /></Svg>],
  ['Graphics', <Svg key="g"><rect x="0.500" y="1.500" width="15" height="13" fill="#1b4f9c" stroke="#a3c6f0" /><rect x="3.500" y="4.500" width="9" height="7" fill="#3a78cc" stroke="#0c2c60" /><circle cx="8" cy="8" r="2" fill="#8fc0f4" stroke="#0c2c60" /></Svg>],
  ['Security', <Svg key="s"><rect width="16" height="16" rx="2" fill="#c8102e" /><path d="M11 2C5 3 3 8 5 12C9 15 14 8 11.500 4Q9 7 8 14" stroke="#fff" strokeWidth="1.600" /></Svg>],
];

const Taskbar = () => (
  <footer className="flex h-[30px] shrink-0 bg-linear-to-b from-[#4d8df5] via-[#2a62dd] via-15% to-[#1f4fc0] text-white">
    <button className="flex w-[97px] shrink-0 items-center rounded-r-[12px] bg-linear-to-b from-[#6cbd63] via-[#3a9a3a] via-20% to-[#2c7f2c] pl-[11px] shadow-[inset_-3px_-2px_4px_#1f5f1f]">
      <WindowsFlag />
      <span className="ml-[3px] text-[17px] font-bold italic leading-none [text-shadow:1px_1px_1px_#1b4d1b] font-['Open_Sans','Noto_Sans',sans-serif]">start</span>
    </button>
    <div className="ml-[9px] flex min-w-0 flex-1 gap-[2px] py-[3px] pr-[14px]">
      {tasks.map((t) => (
        <button key={t.title} className={`flex min-w-0 flex-1 items-center whitespace-nowrap rounded-[3px] pl-[10px] ${t.look}`}>
          {t.icon}
          {t.count && <span className="ml-[3px] font-bold text-[#ffe9a8]">{t.count}</span>}
          <span className="ml-[3px]">{t.title}</span>
          {t.count && <Caret className="ml-auto mr-[3px] text-white" />}
        </button>
      ))}
    </div>
    <div className="flex w-[236px] shrink-0 items-center border-l border-[#0c4fb0] bg-linear-to-b from-[#3ab4f8] via-[#1290e9] via-15% to-[#0f7ad8]">
      <button aria-label="Show hidden icons" className="-ml-[10px] flex size-[17px] shrink-0 items-center justify-center rounded-full border border-[#8fd0fa] bg-linear-to-b from-[#5ab8fa] to-[#1a74dc]">
        <Chevron dir="left" className="text-white" />
      </button>
      <div className="ml-[2px] flex gap-[2px]">
        {trayIcons.map(([name, icon]) => (
          <span key={name} title={name}>{icon}</span>
        ))}
      </div>
      <time className="ml-auto mr-[17px]">7:26 PM</time>
    </div>
  </footer>
);

const Balloon = () => (
  <aside className="absolute bottom-[36px] right-[203px] z-20 h-[64px] w-[331px] rounded-[8px] border border-black bg-[#ffffe1] pl-[10px] pr-[6px] pt-[5px] shadow-[2px_2px_3px_rgba(0,0,0,0.4)]">
    <div className="flex items-start">
      <span className="mt-px"><NetworkIcon /></span>
      <strong className="ml-[8px] mt-[2px] whitespace-nowrap leading-[14px]">Wireless Network Connection is now connected</strong>
      <button aria-label="Dismiss" className="ml-auto flex size-[15px] shrink-0 items-center justify-center rounded-[2px] border border-[#b5b5a0]">
        <Svg w={9} h={9}><path d="M1 1l7 7M8 1L1 8" stroke="#8a8a7a" strokeWidth="1.600" /></Svg>
      </button>
    </div>
    <p className="mt-[6px] leading-[13px]">Connected to: DHBK_B3</p>
    <p className="leading-[13px]">Signal Strength: Good</p>
    <Svg w={24} h={22} className="absolute right-[10px] top-[61px]">
      <path d="M1 1.500L19.500 20V1.500" fill="#ffffe1" />
      <path d="M1 1.500L19.500 20V1.500" stroke="#000" />
      <path d="M2 0.500h17" stroke="#ffffe1" strokeWidth="2" />
    </Svg>
  </aside>
);

const App = () => {
  return (
    <div className="relative flex h-screen flex-col overflow-hidden bg-[#ece9d8] text-[11px] leading-4 text-black font-['DejaVu_Sans_Condensed','Noto_Sans',sans-serif]">
      <TitleBar />
      <MenuBar />
      <Toolbars />
      <FormulaBar />
      <Sheet />
      <SheetTabs />
      <DrawingBar />
      <StatusBar />
      <Taskbar />
      <SolverDialog />
      <Balloon />
    </div>
  );
};

export default App;
